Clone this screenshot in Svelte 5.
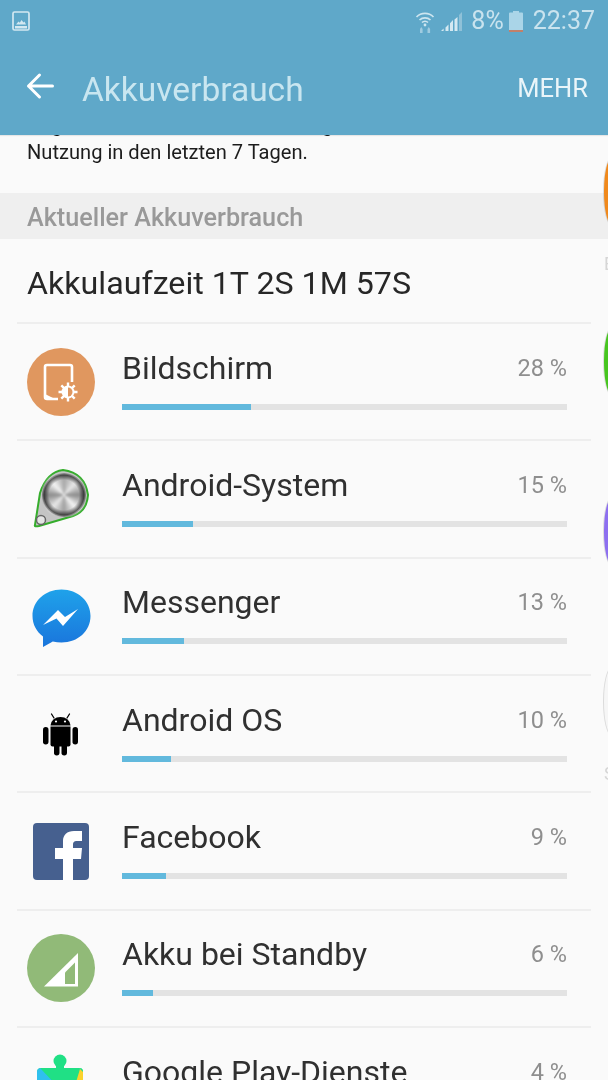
<script>
  const rows = [
    { id: 'screen', label: 'Bildschirm', pct: 28, width: 129 },
    { id: 'system', label: 'Android-System', pct: 15, width: 71 },
    { id: 'messenger', label: 'Messenger', pct: 13, width: 62 },
    { id: 'os', label: 'Android OS', pct: 10, width: 49 },
    { id: 'facebook', label: 'Facebook', pct: 9, width: 44 },
    { id: 'standby', label: 'Akku bei Standby', pct: 6, width: 31 },
    { id: 'play', label: 'Google Play-Dienste', pct: 4, width: 22 }
  ];
  const peeks = [
    { color: '#f0891c', label: 'Energie' },
    { color: '#47c61f', label: '' },
    { color: '#8d6ff0', label: '' },
    { color: '#f6f6f6', label: 'Sicherheit' }
  ];
</script>

<div class="page">
  <header class="appbar">
    <div class="status">
      <svg class="pic" viewBox="0 0 18 20" width="18" height="20">
        <rect x="1" y="1" width="16" height="18" rx="1.500" fill="none" stroke="#d3e8f1" stroke-width="1.700"/>
        <path d="M3 15h12v2.500H3z" fill="#d3e8f1"/>
        <path d="M4 13.500l2.500-3 1.300 1.200L9.500 9 11.500 11.500l1-1 1.500 3z" fill="#d3e8f1"/>
      </svg>
      <div class="status-right">
        <svg viewBox="0 0 20 23" width="20" height="23">
          <path d="M1.500 7a12 12 0 0 1 17 0M4.500 10a8 8 0 0 1 11 0M7 12.500a4.200 4.200 0 0 1 6 0" fill="none" stroke="#cde5ef" stroke-width="1.700"/>
          <circle cx="10" cy="15" r="1.400" fill="#cde5ef"/>
          <path d="M5 23v-4l1.300-2 1.300 2v4zM12.500 23v-4l1.300-2 1.300 2v4z" fill="#9fcbe0"/>
        </svg>
        <svg class="signal" viewBox="0 0 21 21" width="21" height="21">
          <path d="M0 20h2.600v-2.400zM4.500 20h3v-6.500l-3 3zM9 20h3V9l-3 3.200zM13.500 20h3V6l-3 2.500z" fill="#d5e9f2"/>
          <path d="M18 20h3V1l-3 3z" fill="#8fc1d8"/>
        </svg>
        <span class="pct-status">8%</span>
        <svg class="batt" viewBox="0 0 14 21" width="14" height="21">
          <path d="M4 0h6v1.500h3a1 1 0 0 1 1 1V19H0V2.500a1 1 0 0 1 1-1h3z" fill="#aad5e8"/>
          <rect y="19" width="14" height="2" fill="#c2806a"/>
        </svg>
        <span class="clock">22:37</span>
      </div>
    </div>
    <div class="toolbar">
      <svg class="back" viewBox="0 0 28 28" width="28" height="28">
        <path d="M26.500 14H2.500M13.500 3L2.500 14l11 11" fill="none" stroke="#fff" stroke-width="3" stroke-linecap="round" stroke-linejoin="round"/>
      </svg>
      <h1>Akkuverbrauch</h1>
      <span class="more">MEHR</span>
    </div>
  </header>

  <main class="scroll">
    <p class="intro">Angaben zum Akkuverbrauch aufgrund Ihrer<br />Nutzung in den letzten 7 Tagen.</p>
    <div class="band">Aktueller Akkuverbrauch</div>
    <div class="list">
      <div class="life">Akkulaufzeit 1T 2S 1M 57S</div>
      {#each rows as row}
        <div class="row">
          <div class="icon">
            {#if row.id === 'screen'}
              <svg viewBox="0 0 68 68" width="68" height="68">
                <circle cx="34" cy="34" r="34" fill="#e0975f"/>
                <path d="M31 51H20q-2 0-2-2V19q0-2 2-2h23q2 0 2 2v15" fill="none" stroke="#fff" stroke-width="2.600"/>
                <path d="M18 46v5h10z" fill="#fff"/>
                <circle cx="41" cy="44" r="6.500" fill="#fff"/>
                <path d="M41 34.500v19M31.500 44h19M34.300 37.300l13.400 13.400M47.700 37.300L34.300 50.700" stroke="#fff" stroke-width="2.400"/>
                <path d="M41 39.500a4.500 4.500 0 0 1 0 9z" fill="#e0975f"/>
              </svg>
            {:else if row.id === 'system'}
              <svg viewBox="0 0 68 68" width="68" height="68">
                <defs>
                  <radialGradient id="rim" cx="50%" cy="50%" r="50%">
                    <stop offset="0.68" stop-color="#000" stop-opacity="0"/>
                    <stop offset="0.9" stop-color="#000" stop-opacity="0.6"/>
                    <stop offset="1" stop-color="#000" stop-opacity="0.15"/>
                  </radialGradient>
                </defs>
                <path d="M8 60L13 28Q20 7 36 5Q58 8 61 30Q60 46 46 51L12 61Q7 62 8 60z" fill="#c4c4c4" stroke="#35ad2c" stroke-width="2"/>
                <foreignObject x="15" y="8" width="44" height="44">
                  <div class="brushed"></div>
                </foreignObject>
                <circle cx="37" cy="30" r="22" fill="url(#rim)"/>
                <circle cx="14" cy="55" r="4.500" fill="#e4e4e4" stroke="#666" stroke-width="1.500"/>
              </svg>
            {:else if row.id === 'messenger'}
              <svg viewBox="0 0 68 68" width="68" height="68">
                <defs>
                  <linearGradient id="msg" x1="0" y1="0" x2="0" y2="1">
                    <stop offset="0" stop-color="#1fa2ea"/>
                    <stop offset="1" stop-color="#1a75dc"/>
                  </linearGradient>
                </defs>
                <g transform="translate(0 1)">
                  <path d="M34.500 6.500C18 6.500 5.500 18 5.500 33c0 8.500 4 15.500 10.500 20.500V64l9.800-5.600c2.800.8 5.700 1.100 8.700 1.100 16.500 0 29-11.500 29-26.500S51 6.500 34.500 6.500z" fill="url(#msg)"/>
                  <path d="M16 42l15-15 7 7 13-8-15 17-6.500-7.500z" fill="#fff"/>
                </g>
              </svg>
            {:else if row.id === 'os'}
              <svg viewBox="0 0 68 68" width="68" height="68">
                <path d="M27 18l-2.500-4M40 18l2.500-4" stroke="#000" stroke-width="1.300" stroke-linecap="round"/>
                <path d="M23.500 25.500a10 8.500 0 0 1 20 0z" fill="#000"/>
                <circle cx="29" cy="21.500" r="1.100" fill="#fff"/>
                <circle cx="38" cy="21.500" r="1.100" fill="#fff"/>
                <path d="M23.500 26.500h20v18a2 2 0 0 1-2 2h-16a2 2 0 0 1-2-2z" fill="#000"/>
                <rect x="16" y="27" width="5.500" height="17.500" rx="2.700" fill="#000"/>
                <rect x="45.500" y="27" width="5.500" height="17.500" rx="2.700" fill="#000"/>
                <rect x="27" y="42" width="5.500" height="13.500" rx="2.700" fill="#000"/>
                <rect x="34.500" y="42" width="5.500" height="13.500" rx="2.700" fill="#000"/>
              </svg>
            {:else if row.id === 'facebook'}
              <svg viewBox="0 0 68 68" width="68" height="68">
                <rect x="6" y="6" width="56" height="57" rx="4" fill="#46608f"/>
                <path d="M36 63V42h-8V31h8v-7c0-6 4-10 11-10h8v10h-5c-3 0-4 1-4 4v3h9l-1 11h-8v21z" fill="#fff"/>
              </svg>
            {:else if row.id === 'standby'}
              <svg viewBox="0 0 68 68" width="68" height="68">
                <circle cx="34" cy="34" r="34" fill="#91ba78"/>
                <path d="M17 52.500L51 19v33.500z" fill="#fff"/>
                <path d="M38 38.500L48 28.500V50H38z" fill="#91ba78"/>
              </svg>
            {:else}
              <svg viewBox="0 0 68 68" width="68" height="68">
                <path d="M10 20q0-4 4-4h38q4 0 4 4v40H10z" fill="#20e085"/>
                <circle cx="33" cy="9" r="6.500" fill="#20e085"/>
                <rect x="29" y="12" width="8" height="6" fill="#20e085"/>
                <path d="M10 20q0-3 3-4l20 21-23 23z" fill="#2fc0ee"/>
                <path d="M56 20q0-3-2-4L33 37l23 23z" fill="#20e085"/>
                <path d="M56 20v40L44 47 53 17z" fill="#fad22c"/>
              </svg>
            {/if}
          </div>
          <div class="body">
            <div class="line">
              <span class="name">{row.label}</span>
              <span class="pct">{row.pct} %</span>
            </div>
            <div class="track"><div class="fill" style="width: {row.width}px"></div></div>
          </div>
        </div>
      {/each}
    </div>
  </main>

  <aside class="peek">
    {#each peeks as p}
      <div class="peek-item">
        <div class="dot" style="background: {p.color}"></div>
        {#if p.label}<span>{p.label}</span>{/if}
      </div>
    {/each}
  </aside>
</div>

<style>
  :global(body) {
    margin: 0;
    background: #fafafa;
  }
  .page {
    position: relative;
    width: 608px;
    height: 1080px;
    overflow: hidden;
    display: flex;
    flex-direction: column;
    background: #fafafa;
    font-family: Roboto, "Liberation Sans", sans-serif;
    filter: blur(0.55px);
  }
  .appbar {
    position: relative;
    z-index: 1;
    height: 135px;
    flex: none;
    background: #5fa8c9;
    box-shadow: 0 1px 1px rgba(0, 0, 0, 0.08);
  }
  .status {
    height: 42px;
    display: flex;
    align-items: center;
    justify-content: space-between;
    padding: 0 13px 0 12px;
  }
  .status-right {
    display: flex;
    align-items: center;
    color: #c9e3ee;
    font-size: 25px;
    line-height: 42px;
  }
  .signal {
    margin-left: 6px;
    margin-right: 9px;
  }
  .batt {
    margin-left: 5px;
    margin-right: 10px;
  }
  .toolbar {
    height: 93px;
    display: flex;
    align-items: center;
    padding: 0 20px 0 26px;
  }
  .back {
    margin-bottom: 5px;
  }
  h1 {
    margin: 2px 0 0 28px;
    flex: 1;
    font-size: 33.500px;
    font-weight: 400;
    color: #c9e6f0;
  }
  .more {
    font-size: 25.500px;
    color: #eaf5f9;
    padding-bottom: 2px;
  }
  .scroll {
    flex: 1;
    min-height: 0;
  }
  .intro {
    margin: -23px 0 0;
    padding: 0 27px;
    height: 81px;
    font-size: 20.100px;
    line-height: 27px;
    color: #1c1c1c;
  }
  .band {
    height: 46px;
    line-height: 50px;
    padding-left: 27px;
    background: #efefef;
    color: #999;
    font-size: 25.200px;
    font-weight: 500;
  }
  .list {
    margin: 0 17px;
  }
  .life {
    height: 85px;
    line-height: 88px;
    padding-left: 10px;
    font-size: 32.200px;
    color: #272727;
    border-bottom: 2px solid #eeeeee;
    box-sizing: border-box;
  }
  .row {
    box-sizing: border-box;
    height: 117.330px;
    display: flex;
    align-items: center;
    gap: 27px;
    padding: 0 24px 0 10px;
    border-bottom: 2px solid #eeeeee;
  }
  .icon {
    width: 68px;
    height: 68px;
    flex: none;
  }
  .icon svg {
    display: block;
  }
  .brushed {
    width: 44px;
    height: 44px;
    border-radius: 50%;
    background: conic-gradient(#a8a8a8, #e8e8e8 12%, #8c8c8c 25%, #f4f4f4 38%, #a0a0a0 50%, #e8e8e8 62%, #8c8c8c 75%, #f4f4f4 88%, #a8a8a8);
    filter: blur(1px);
  }
  .body {
    flex: 1;
    padding-bottom: 2px;
  }
  .line {
    display: flex;
    align-items: center;
    justify-content: space-between;
    height: 32px;
    line-height: 32px;
    margin-bottom: 20px;
  }
  .name {
    font-size: 32px;
    color: #303030;
  }
  .pct {
    font-size: 23.500px;
    color: #8e8e8e;
  }
  .track {
    height: 6px;
    background: #e3e3e3;
  }
  .fill {
    height: 100%;
    background: #62b9dd;
  }
  .peek {
    position: absolute;
    left: 604px;
    top: 158px;
    display: flex;
    flex-direction: column;
    gap: 103px;
  }
  .peek-item {
    width: 64px;
    height: 67px;
    position: relative;
  }
  .dot {
    width: 64px;
    height: 67px;
    border-radius: 8px / 33px;
    box-shadow: 0 0 0 1px rgba(0, 0, 0, 0.12);
  }
  .peek-item span {
    position: absolute;
    top: 95px;
    left: 0;
    font-size: 18px;
    color: #d6d6d6;
    white-space: nowrap;
  }
</style>
